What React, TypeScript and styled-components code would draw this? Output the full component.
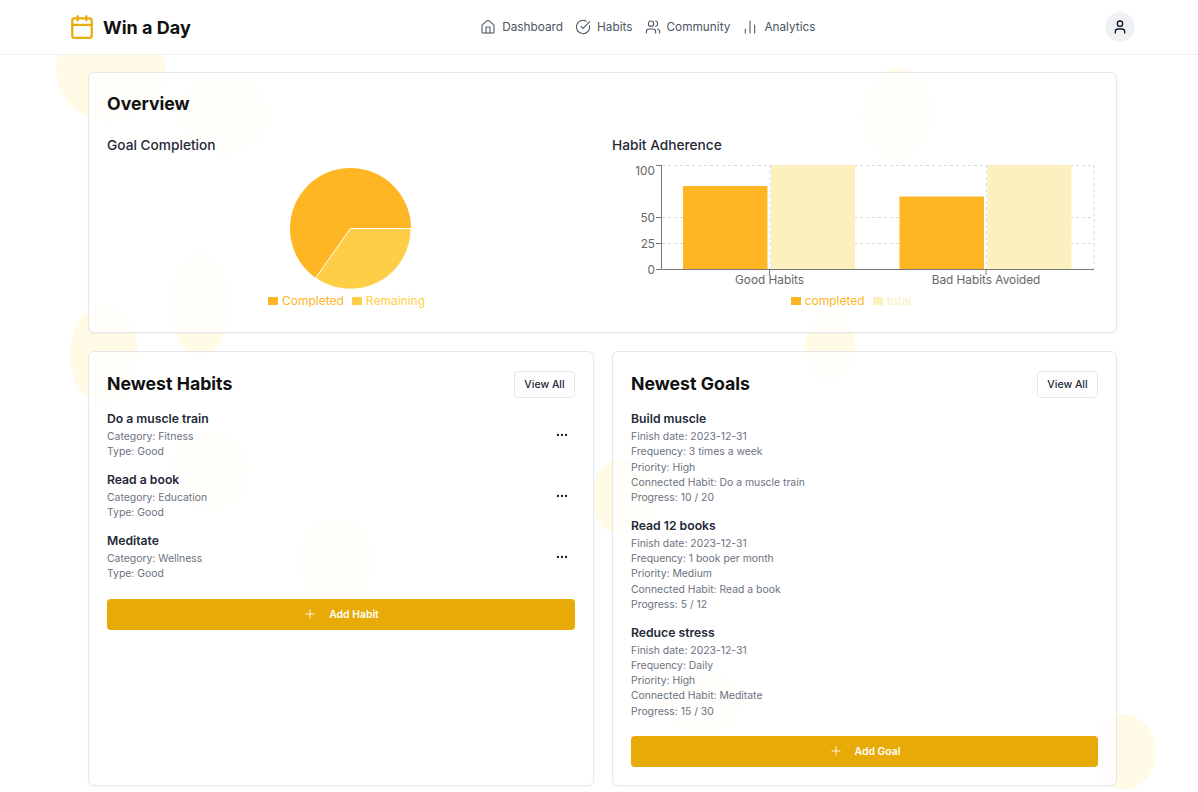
import React from 'react';
import styled, { createGlobalStyle } from 'styled-components';
import {
  Calendar,
  ChartNoAxesColumn,
  CircleCheckBig,
  Ellipsis,
  House,
  Plus,
  User,
  Users,
} from 'lucide-react';

const GlobalStyle = createGlobalStyle`
  html, body {
    margin: 0;
    padding: 0;
    background: #ffffff;
    font-family: Inter, "Liberation Sans", sans-serif;
    color: #111827;
    overflow: hidden;
  }
  * { box-sizing: border-box; }
`;

const Page = styled.div`
  position: relative;
  width: 1198px;
  height: 792px;
  overflow: hidden;
`;

const Blob = styled.div<{ $x: number; $y: number; $w: number; $h: number }>`
  position: absolute;
  left: ${(p) => p.$x}px;
  top: ${(p) => p.$y}px;
  width: ${(p) => p.$w}px;
  height: ${(p) => p.$h}px;
  border-radius: 50%;
  background: #fffbe6;
`;

const Header = styled.header`
  position: relative;
  height: 55px;
  padding: 0 63px 0 69px;
  background: #ffffff;
  border-bottom: 1px solid #f0f1f3;
  display: flex;
  align-items: center;
  justify-content: space-between;
`;

const Brand = styled.div`
  display: flex;
  align-items: center;
  gap: 8px;
  color: #eaab08;
`;

const BrandName = styled.span`
  font-size: 18px;
  font-weight: 700;
  color: #111111;
`;

const Nav = styled.nav`
  display: flex;
  align-items: center;
  gap: 12px;
`;

const NavItem = styled.a`
  display: flex;
  align-items: center;
  gap: 6px;
  font-size: 11.8px;
  color: #4b5563;
`;

const Avatar = styled.div`
  width: 30px;
  height: 30px;
  border-radius: 50%;
  background: #f1f2f4;
  color: #111827;
  display: flex;
  align-items: center;
  justify-content: center;
`;

const Main = styled.main`
  position: relative;
  padding: 17px 81px 0 88px;
  display: flex;
  flex-direction: column;
  gap: 18px;
`;

const Card = styled.section`
  background: rgba(255, 255, 255, 0.8);
  border: 1px solid #e5e7eb;
  border-radius: 6px;
  padding: 18px;
  box-shadow: 0 1px 2px rgba(0, 0, 0, 0.04);
`;

const CardTitle = styled.h2`
  margin: 0;
  font-size: 17.7px;
  line-height: 26px;
  font-weight: 700;
  color: #111111;
`;

const ChartGrid = styled.div`
  display: grid;
  grid-template-columns: 487px 486px;
  column-gap: 18px;
  margin-top: 15px;
`;

const ChartTitle = styled.h3`
  margin: 0;
  font-size: 13.7px;
  line-height: 26px;
  font-weight: 500;
  color: #1f2937;
`;

const ChartBox = styled.div`
  height: 156px;
  display: flex;
  flex-direction: column;
  align-items: center;
`;

const Legend = styled.div`
  display: flex;
  justify-content: center;
  font-size: 12px;
  line-height: 16px;
`;

const LegendItem = styled.span<{ $color: string; $text?: string }>`
  display: flex;
  align-items: center;
  gap: 4px;
  margin-right: 8px;
  color: ${(p) => p.$text || p.$color};

  &::before {
    content: '';
    width: 10px;
    height: 8px;
    background: ${(p) => p.$color};
  }
`;

const Columns = styled.div`
  display: grid;
  grid-template-columns: 506px 505px;
  column-gap: 18px;
`;

const ListCard = styled(Card)`
  height: 435px;
`;

const ListHeader = styled.div`
  display: flex;
  align-items: center;
  justify-content: space-between;
  height: 28px;
  margin-bottom: 13px;
`;

const ViewAll = styled.button`
  width: 61px;
  height: 27px;
  margin-top: 1px;
  padding: 0;
  background: #ffffff;
  border: 1px solid #e5e7eb;
  border-radius: 4px;
  font-family: inherit;
  font-size: 10.5px;
  font-weight: 500;
  color: #1f2937;
`;

const Item = styled.div`
  display: flex;
  align-items: center;
  justify-content: space-between;
  margin-bottom: 12.5px;
`;

const ItemName = styled.div`
  font-size: 12.2px;
  line-height: 16px;
  margin-bottom: 2px;
  font-weight: 600;
  color: #1f2937;
`;

const ItemLine = styled.div`
  font-size: 10.4px;
  line-height: 15.25px;
  color: #6b7280;
`;

const MoreButton = styled.span`
  display: flex;
  width: 24px;
  justify-content: center;
  margin-right: 1px;
  color: #111827;
`;

const AddButton = styled.button`
  width: 100%;
  height: 31px;
  margin-top: 17px;
  background: #e8aa07;
  border: none;
  border-radius: 4px;
  color: #ffffff;
  font-family: inherit;
  font-size: 10.4px;
  font-weight: 600;
  display: flex;
  align-items: center;
  justify-content: center;
  gap: 12px;
`;

const PieChart = () => (
  <svg width="487" height="135" viewBox="107 158 487 135">
    <circle cx="350.500" cy="228.500" r="60.500" fill="#feb624" />
    <path
      d="M350.500 228.500 L411 228.500 A60.500 60.500 0 0 1 315.500 278 Z"
      fill="#fecf46"
      stroke="#ffffff"
      strokeWidth="1"
    />
  </svg>
);

const axisText = { fontSize: 11.8, fill: '#666666', fontFamily: 'Inter, sans-serif' };

const BarChart = () => (
  <svg width="486" height="135" viewBox="612 158 486 135">
    <g stroke="#d9d9d9" strokeDasharray="3 3" fill="none">
      <path d="M662 165.500 H1094 M662 217.500 H1094 M662 243.500 H1094" />
      <path d="M770 165 V269 M986.500 165 V269 M1094 165 V269" />
    </g>
    <rect x="683" y="186" width="84.500" height="83" fill="#feb624" />
    <rect x="771" y="165" width="84" height="104" fill="#fdf0bf" />
    <rect x="899.500" y="196.500" width="84.500" height="72.500" fill="#feb624" />
    <rect x="987.500" y="165" width="84" height="104" fill="#fdf0bf" />
    <g stroke="#777777" fill="none">
      <path d="M661.500 165 V269.500 H1094" />
      <path d="M656 165.500 H661 M656 217.500 H661 M656 243.500 H661 M656 269.500 H661" />
      <path d="M769.500 269 V275 M986 269 V275" />
    </g>
    <g style={axisText} textAnchor="end">
      <text x="655" y="175">100</text>
      <text x="655" y="222">50</text>
      <text x="655" y="248">25</text>
      <text x="655" y="274">0</text>
    </g>
    <g style={axisText} textAnchor="middle">
      <text x="769.500" y="284">Good Habits</text>
      <text x="986" y="284">Bad Habits Avoided</text>
    </g>
  </svg>
);

const blobs = [
  { x: 56, y: 12, w: 109, h: 110 },
  { x: 180, y: 75, w: 88, h: 80 },
  { x: 862, y: 68, w: 70, h: 92 },
  { x: 70, y: 305, w: 68, h: 100 },
  { x: 170, y: 252, w: 60, h: 104 },
  { x: 805, y: 310, w: 50, h: 72 },
  { x: 172, y: 430, w: 78, h: 80 },
  { x: 298, y: 518, w: 76, h: 82 },
  { x: 592, y: 458, w: 63, h: 78 },
  { x: 665, y: 670, w: 75, h: 65 },
  { x: 1090, y: 714, w: 66, h: 76 },
];

const navItems = [
  { label: 'Dashboard', Icon: House },
  { label: 'Habits', Icon: CircleCheckBig },
  { label: 'Community', Icon: Users },
  { label: 'Analytics', Icon: ChartNoAxesColumn },
];

const habits = [
  { name: 'Do a muscle train', category: 'Fitness' },
  { name: 'Read a book', category: 'Education' },
  { name: 'Meditate', category: 'Wellness' },
];

const goals = [
  {
    name: 'Build muscle',
    frequency: '3 times a week',
    priority: 'High',
    habit: 'Do a muscle train',
    progress: '10 / 20',
  },
  {
    name: 'Read 12 books',
    frequency: '1 book per month',
    priority: 'Medium',
    habit: 'Read a book',
    progress: '5 / 12',
  },
  {
    name: 'Reduce stress',
    frequency: 'Daily',
    priority: 'High',
    habit: 'Meditate',
    progress: '15 / 30',
  },
];

export default function App() {
  return (
    <Page>
      <GlobalStyle />
      {blobs.map((b) => (
        <Blob key={`${b.x}-${b.y}`} $x={b.x} $y={b.y} $w={b.w} $h={b.h} />
      ))}
      <Header>
        <Brand>
          <Calendar size={26} strokeWidth={2} />
          <BrandName>Win a Day</BrandName>
        </Brand>
        <Nav>
          {navItems.map(({ label, Icon }) => (
            <NavItem key={label}>
              <Icon size={16} strokeWidth={1.6} />
              {label}
            </NavItem>
          ))}
        </Nav>
        <Avatar>
          <User size={16} strokeWidth={2} />
        </Avatar>
      </Header>
      <Main>
        <Card>
          <CardTitle>Overview</CardTitle>
          <ChartGrid>
            <div>
              <ChartTitle>Goal Completion</ChartTitle>
              <ChartBox>
                <PieChart />
                <Legend>
                  <LegendItem $color="#feb624">Completed</LegendItem>
                  <LegendItem $color="#fecf46">Remaining</LegendItem>
                </Legend>
              </ChartBox>
            </div>
            <div>
              <ChartTitle>Habit Adherence</ChartTitle>
              <ChartBox>
                <BarChart />
                <Legend>
                  <LegendItem $color="#feb624">completed</LegendItem>
                  <LegendItem $color="#fdf0bf">total</LegendItem>
                </Legend>
              </ChartBox>
            </div>
          </ChartGrid>
        </Card>
        <Columns>
          <ListCard>
            <ListHeader>
              <CardTitle>Newest Habits</CardTitle>
              <ViewAll>View All</ViewAll>
            </ListHeader>
            {habits.map((h) => (
              <Item key={h.name}>
                <div>
                  <ItemName>{h.name}</ItemName>
                  <ItemLine>Category: {h.category}</ItemLine>
                  <ItemLine>Type: Good</ItemLine>
                </div>
                <MoreButton>
                  <Ellipsis size={14} strokeWidth={2} />
                </MoreButton>
              </Item>
            ))}
            <AddButton>
              <Plus size={14} strokeWidth={1.5} />
              Add Habit
            </AddButton>
          </ListCard>
          <ListCard>
            <ListHeader>
              <CardTitle>Newest Goals</CardTitle>
              <ViewAll>View All</ViewAll>
            </ListHeader>
            {goals.map((g) => (
              <Item key={g.name}>
                <div>
                  <ItemName>{g.name}</ItemName>
                  <ItemLine>Finish date: 2023-12-31</ItemLine>
                  <ItemLine>Frequency: {g.frequency}</ItemLine>
                  <ItemLine>Priority: {g.priority}</ItemLine>
                  <ItemLine>Connected Habit: {g.habit}</ItemLine>
                  <ItemLine>Progress: {g.progress}</ItemLine>
                </div>
              </Item>
            ))}
            <AddButton>
              <Plus size={14} strokeWidth={1.5} />
              Add Goal
            </AddButton>
          </ListCard>
        </Columns>
      </Main>
    </Page>
  );
}
